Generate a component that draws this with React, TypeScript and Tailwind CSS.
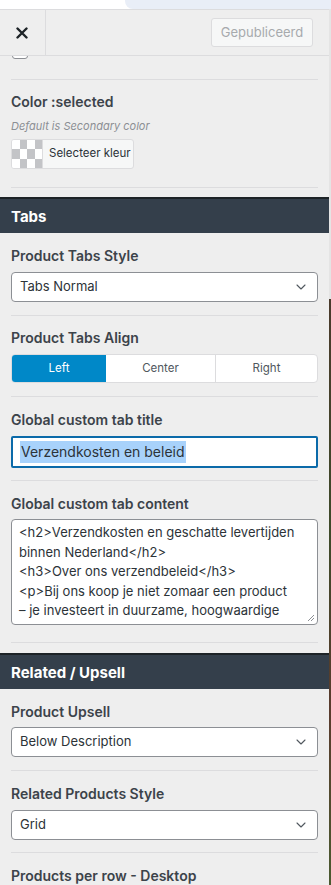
import React from 'react'
import { ChevronDown } from 'lucide-react'

const font = { fontFamily: 'Inter, "Noto Sans", sans-serif' }

function Label({ children, className = '' }: { children: React.ReactNode; className?: string }) {
  return (
    <div className={`h-5 text-[14px] leading-5 font-semibold text-[#3c434a] ${className}`}>
      <span className="relative top-[1px]">{children}</span>
    </div>
  )
}

function Divider({ className = '' }: { className?: string }) {
  return <div className={`border-t border-[#dcdcde] ${className}`} />
}

function Select({ value, className = '' }: { value: string; className?: string }) {
  return (
    <div
      className={`flex h-[30px] items-center justify-between rounded-[4px] border border-[#8c8f94] bg-white pr-[8px] pl-[8px] text-[13px] text-[#2c3338] ${className}`}
    >
      <span>{value}</span>
      <ChevronDown className="h-4 w-4 text-[#50575e]" strokeWidth={1.6} />
    </div>
  )
}

function SectionBar({ title, className = '' }: { title: string; className?: string }) {
  return (
    <div
      className={`flex h-[37px] items-center border-t-2 border-[#1d2327] bg-[#343f4b] px-[11px] text-[15px] font-bold text-white ${className}`}
    >
      <span className="relative top-[1px]">{title}</span>
    </div>
  )
}

export default function App() {
  return (
    <div className="flex h-[885px] w-[331px] overflow-hidden bg-white" style={font}>
      <div className="flex w-[329px] shrink-0 flex-col bg-[#eeeeee]">
        {/* page strip above the panel */}
        <div className="flex h-[9px] shrink-0 bg-white">
          <div className="w-[125px]" />
          <div className="flex-1 rounded-bl-[8px] bg-[#e9eef7]" />
        </div>

        {/* Header */}
        <div className="flex h-[47px] shrink-0 items-center border-y border-[#dcdcde] bg-[#eeeeee]">
          <div className="flex h-full w-[46px] items-center justify-center border-r border-[#dcdcde]">
            <svg width="12" height="12" viewBox="0 0 12 12" className="-ml-[2px]">
              <path d="M1.5 1.5 L10.5 10.5 M10.5 1.5 L1.5 10.5" stroke="#1d2327" strokeWidth="2.4" strokeLinecap="round" />
            </svg>
          </div>
          <div className="flex flex-1 justify-end pr-[16px]">
            <div className="flex h-[29px] w-[102px] items-center justify-center rounded-[3px] border border-[#dcdcde] bg-[#f6f7f7] text-[13px] text-[#a7aaad]">
              Gepubliceerd
            </div>
          </div>
        </div>

        {/* Scrolling content */}
        <div className="flex flex-1 flex-col overflow-hidden">
          <div className="px-[11px]">
            <div className="-mt-[13px] ml-[1px] h-4 w-4 rounded-[3px] border border-[#8c8f94] bg-white" />
            <Divider className="mt-[20px]" />
            <Label className="mt-[11px]">Color :selected</Label>
            <div className="mt-[7px] h-4 text-[11px] leading-4 text-[#8c8f94] italic">Default is Secondary color</div>
            <div className="mt-[5px] flex h-[30px] w-[123px] overflow-hidden rounded-[3px] border border-[#dcdcde] bg-[#f6f7f7]">
              <div className="grid h-full w-[31px] shrink-0 grid-cols-4 grid-rows-3 border-r border-[#dcdcde]">
                {Array.from({ length: 12 }).map((_, i) => (
                  <div
                    key={i}
                    className={(Math.floor(i / 4) + (i % 4)) % 2 === 0 ? 'bg-white' : 'bg-[#c3c4c7]'}
                  />
                ))}
              </div>
              <div className="flex flex-1 items-center pl-[6px] text-[11.5px] whitespace-nowrap text-[#2c3338]">
                Selecteer kleur
              </div>
            </div>
            <Divider className="mt-[18px]" />
          </div>

          <SectionBar title="Tabs" className="mt-[9px]" />

          <div className="px-[11px]">
            <Label className="mt-[12px]">Product Tabs Style</Label>
            <Select value="Tabs Normal" className="mt-[7px]" />
            <Divider className="mt-[13px]" />

            <Label className="mt-[11px]">Product Tabs Align</Label>
            <div className="mt-[7px] flex h-[29px] overflow-hidden rounded-[4px] border border-[#dcdcde] bg-white text-[11.5px] text-[#50575e]">
              <div className="flex w-[94px] items-center justify-center bg-[#0088c8] text-white">Left</div>
              <div className="flex w-[110px] items-center justify-center border-r border-[#dcdcde]">Center</div>
              <div className="flex flex-1 items-center justify-center">Right</div>
            </div>
            <Divider className="mt-[13px]" />

            <Label className="mt-[12px]">Global custom tab title</Label>
            <div className="mt-[7px] flex h-[32px] items-center rounded-[2px] border-2 border-[#0b6aa9] bg-white pl-[7px] text-[14px] text-[#2c3338]">
              <span className="bg-[#a8d2fb] px-[1px] leading-[22px]">Verzendkosten en beleid</span>
            </div>
            <Divider className="mt-[12px]" />

            <Label className="mt-[12px]">Global custom tab content</Label>
            <div className="relative mt-[6px] h-[106px] overflow-hidden rounded-[4px] border border-[#8c8f94] bg-white pt-[3px] pl-[7px] text-[13px] leading-[19.5px] text-[#2c3338]">
              <div>&lt;h2&gt;Verzendkosten en geschatte levertijden</div>
              <div>binnen Nederland&lt;/h2&gt;</div>
              <div>&lt;h3&gt;Over ons verzendbeleid&lt;/h3&gt;</div>
              <div>&lt;p&gt;Bij ons koop je niet zomaar een product</div>
              <div>– je investeert in duurzame, hoogwaardige</div>
              <svg width="8" height="8" viewBox="0 0 8 8" className="absolute right-[2px] bottom-[2px]">
                <path d="M7 1 L1 7 M7 4 L4 7" stroke="#8c8f94" strokeWidth="1" />
              </svg>
            </div>
            <Divider className="mt-[17px]" />
          </div>

          <SectionBar title="Related / Upsell" className="mt-[10px] h-[36px]" />

          <div className="px-[11px]">
            <Label className="mt-[12px]">Product Upsell</Label>
            <Select value="Below Description" className="mt-[6px]" />
            <Divider className="mt-[13px]" />

            <Label className="mt-[12px]">Related Products Style</Label>
            <Select value="Grid" className="mt-[7px]" />
            <Divider className="mt-[12px]" />

            <Label className="mt-[12px]">Products per row - Desktop</Label>
          </div>
        </div>
      </div>

      {/* page behind the panel */}
      <div className="flex w-[2px] flex-col">
        <div className="h-[9px] bg-[#e9eef7]" />
        <div className="h-[290px] bg-[#e4e4e4]" />
        <div className="flex-1 bg-[linear-gradient(180deg,#4a3a2c,#3e4a2a_40%,#5a3b2e_70%,#4a5a30)]" />
      </div>
    </div>
  )
}
